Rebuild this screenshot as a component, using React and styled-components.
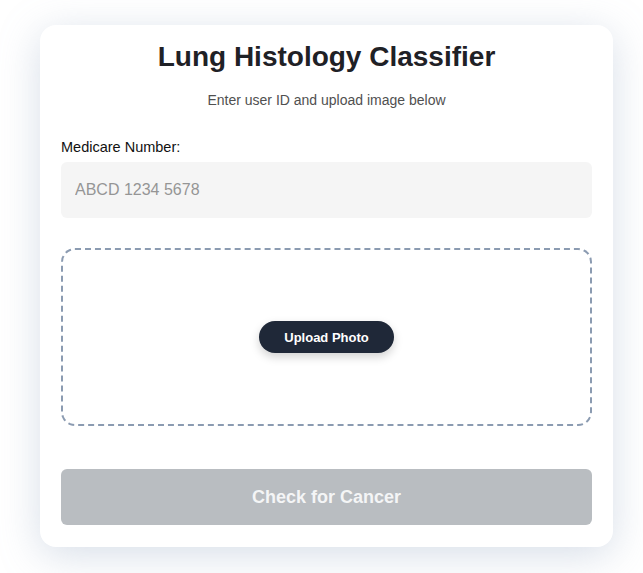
import React from "react";
import styled, { createGlobalStyle } from "styled-components";

const Global = createGlobalStyle`
  html, body { margin: 0; padding: 0; background: #ffffff; }
  body { font-family: "Liberation Sans", Arial, sans-serif; }
  * { box-sizing: border-box; }
`;

const Page = styled.div`
  width: 643px;
  height: 573px;
  padding: 25px 30px 26px 40px;
  background: #ffffff;
`;

const Card = styled.div`
  width: 573px;
  height: 522px;
  background: #ffffff;
  border-radius: 16px;
  box-shadow: 0 8px 40px rgba(140, 160, 190, 0.35);
  padding: 16px 21px 22px;
  display: flex;
  flex-direction: column;
`;

const Title = styled.h1`
  margin: 0;
  text-align: center;
  font-size: 28px;
  font-weight: 700;
  color: #1f2126;
  line-height: 32px;
`;

const Subtitle = styled.p`
  margin: 18px 0 0;
  text-align: center;
  font-size: 14px;
  color: #505050;
  line-height: 18px;
`;

const Label = styled.label`
  margin-top: 29px;
  font-size: 14.5px;
  color: #111111;
  line-height: 18px;
`;

const Input = styled.input`
  margin-top: 6px;
  height: 56px;
  width: 100%;
  border: none;
  border-radius: 6px;
  background: #f5f5f5;
  padding: 0 14px;
  font-family: "Liberation Sans", Arial, sans-serif;
  font-size: 16px;
  color: #333;
  outline: none;
  &::placeholder { color: #959595; }
`;

const Drop = styled.div`
  margin-top: 30px;
  height: 178px;
  border: 2px dashed #8b9bb1;
  border-radius: 14px;
  display: flex;
  align-items: center;
  justify-content: center;
`;

const UploadButton = styled.button`
  height: 32px;
  padding: 0 25px;
  border: none;
  border-radius: 16px;
  background: #1f2838;
  color: #ffffff;
  font-family: "Liberation Sans", Arial, sans-serif;
  font-size: 13px;
  font-weight: 700;
  box-shadow: 0 4px 10px rgba(0, 0, 0, 0.18);
`;

const CheckButton = styled.button`
  margin-top: 43px;
  height: 56px;
  width: 100%;
  border: none;
  border-radius: 6px;
  background: #b9bdc1;
  color: #f4f5f6;
  font-family: "Liberation Sans", Arial, sans-serif;
  font-size: 18px;
  font-weight: 700;
`;

export default function App() {
  return (
    <>
      <Global />
      <Page>
        <Card>
          <Title>Lung Histology Classifier</Title>
          <Subtitle>Enter user ID and upload image below</Subtitle>
          <Label>Medicare Number:</Label>
          <Input placeholder="ABCD 1234 5678" />
          <Drop>
            <UploadButton>Upload Photo</UploadButton>
          </Drop>
          <CheckButton disabled>Check for Cancer</CheckButton>
        </Card>
      </Page>
    </>
  );
}
